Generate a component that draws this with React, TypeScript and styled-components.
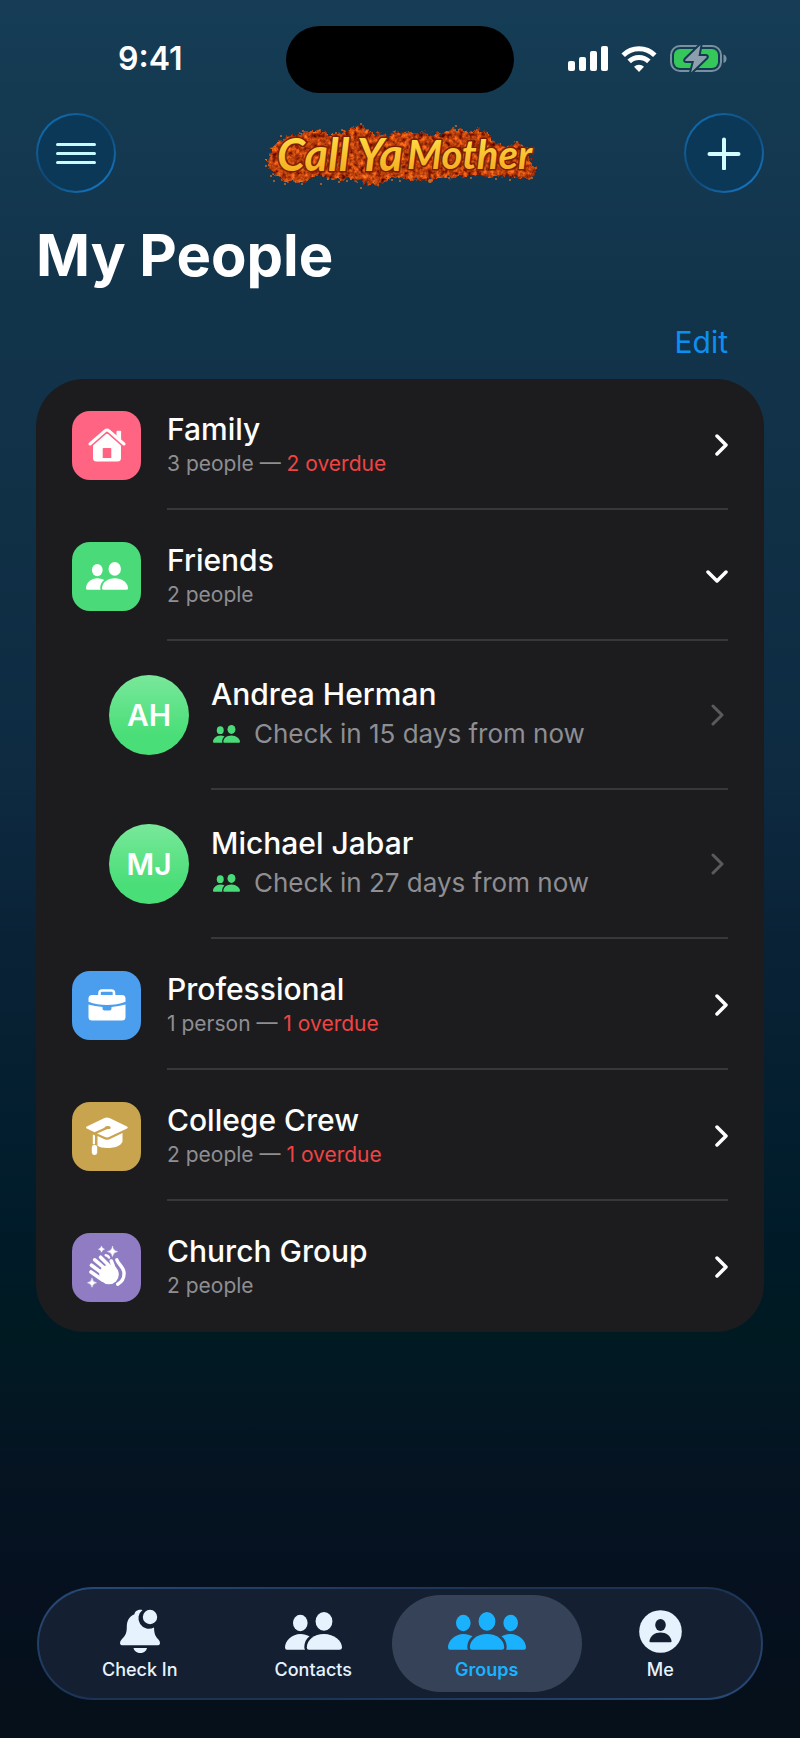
import * as React from 'react'
import styled, { createGlobalStyle } from 'styled-components'

const colors = {
  card: '#1c1c1e',
  divider: '#38383a',
  text: '#ffffff',
  muted: '#8e8e93',
  overdue: '#ef4444',
  link: '#0d8ff2',
  tab: '#e6f3ff',
  tabActive: '#1ab2ff',
}

const GlobalStyle = createGlobalStyle`
  * {
    box-sizing: border-box;
  }
  body {
    margin: 0;
    background: #05101a;
  }
  button {
    font: inherit;
    color: inherit;
    background: none;
    border: 0;
    padding: 0;
    cursor: pointer;
  }
`

const Screen = styled.div`
  min-height: 100vh;
  display: flex;
  flex-direction: column;
  color: ${colors.text};
  font-family: Inter, 'Liberation Sans', sans-serif;
  background: linear-gradient(
    #153d55 0%,
    #12344b 17%,
    #103046 30%,
    #0d2a41 45%,
    #0a2236 54%,
    #031e2e 65%,
    #001a28 72%,
    #001a22 77%,
    #051422 84%,
    #06101f 92%,
    #05101a 100%
  );
`

const StatusBar = styled.div`
  display: grid;
  grid-template-columns: 1fr 228px 1fr;
  padding: 25px 36px 0;
  align-items: center;
`

const Clock = styled.span`
  font-size: 32px;
  line-height: 68px;
  font-weight: 600;
  padding-left: 82px;
`

const Island = styled.div`
  height: 67px;
  border-radius: 34px;
  background: #000;
`

const StatusIcons = styled.div`
  display: flex;
  align-items: center;
  justify-content: flex-end;
  gap: 13px;
  padding-right: 37px;
`

const Header = styled.header`
  display: flex;
  align-items: center;
  justify-content: space-between;
  padding: 20px 36px 0;
`

const RoundButton = styled.button`
  width: 80px;
  height: 80px;
  display: grid;
  place-items: center;
  border-radius: 50%;
  border: 2px solid transparent;
  background:
    linear-gradient(#0c3858, #0c3858) padding-box,
    linear-gradient(140deg, #0f6db0 10%, #0f4a78 45%, #0f4a78 55%, #1478c4 90%) border-box;
`

const Title = styled.h1`
  margin: 26px 36px 0;
  font-size: 58px;
  line-height: 72px;
  font-weight: 700;
`

const Toolbar = styled.div`
  display: flex;
  justify-content: flex-end;
  padding: 33px 72px 19px;
`

const EditButton = styled.button`
  font-size: 30px;
  line-height: 36px;
  color: ${colors.link};
`

const Card = styled.ul`
  list-style: none;
  margin: 0 36px;
  padding: 0;
  border-radius: 48px;
  background: ${colors.card};
`

const Item = styled.li<{ $indent: number }>`
  position: relative;

  &:not(:last-child)::after {
    content: '';
    position: absolute;
    left: ${props => props.$indent}px;
    right: 36px;
    bottom: 0;
    height: 2px;
    background: ${colors.divider};
  }
`

const GroupButton = styled.button`
  width: 100%;
  display: flex;
  align-items: center;
  gap: 26px;
  padding: 31px 36px 30px;
  text-align: left;
`

const ContactButton = styled(GroupButton)`
  gap: 22px;
  padding: 34px 40px 35px 73px;
`

const Tile = styled.span<{ $color: string }>`
  width: 69px;
  height: 69px;
  display: grid;
  place-items: center;
  border-radius: 18px;
  background: ${props => props.$color};
`

const Avatar = styled.span`
  width: 80px;
  height: 80px;
  display: grid;
  place-items: center;
  border-radius: 50%;
  font-size: 30px;
  font-weight: 600;
  background: linear-gradient(#79e89b, #4ade78 75%);
`

const Labels = styled.span`
  flex: 1;
  display: flex;
  flex-direction: column;
`

const Name = styled.span`
  font-size: 30px;
  line-height: 38px;
  font-weight: 500;
`

const Summary = styled.span`
  font-size: 21px;
  line-height: 32px;
  color: ${colors.muted};
`

const Overdue = styled.span`
  color: ${colors.overdue};
`

const NextCheckIn = styled.span`
  display: flex;
  align-items: center;
  gap: 14px;
  padding-left: 2px;
  font-size: 26px;
  line-height: 42px;
  color: ${colors.muted};
`

const TabBar = styled.nav`
  display: flex;
  margin: auto 37px 38px;
  height: 113px;
  padding: 5px 14px;
  border: 2px solid transparent;
  border-radius: 57px;
  background:
    linear-gradient(#142031, #142031) padding-box,
    linear-gradient(165deg, #294a78, #1c3354 40%, #1c3354 60%, #294a78) border-box;
`

const Tab = styled.button<{ $active?: boolean }>`
  position: relative;
  flex: 1;
  display: flex;
  flex-direction: column;
  align-items: center;
  color: ${props => (props.$active ? colors.tabActive : colors.tab)};

  &::before {
    content: '';
    position: absolute;
    inset: 1px -8px;
    border-radius: 49px;
    background: ${props => (props.$active ? '#364257' : 'transparent')};
  }
`

const TabIcon = styled.span`
  position: relative;
  height: 62px;
  display: flex;
  align-items: center;
  padding-top: 12px;
`

const TabLabel = styled.span<{ $active?: boolean }>`
  position: relative;
  font-size: 18px;
  line-height: 28px;
  font-weight: ${props => (props.$active ? 600 : 500)};
`

const SignalIcon = () => (
  <svg width="40" height="26" viewBox="0 0 40 26" fill="#fff">
    <rect x="0" y="15" width="7" height="10" rx="2" />
    <rect x="11" y="11" width="7" height="14" rx="2" />
    <rect x="22" y="5" width="7" height="20" rx="2" />
    <rect x="33" y="0" width="7" height="25" rx="2" />
  </svg>
)

const WifiIcon = () => (
  <svg width="36" height="26" viewBox="0 0 36 26" fill="none" stroke="#fff" strokeWidth="5">
    <path d="M2.2 9.2a22.5 22.5 0 0 1 31.6 0" />
    <path d="M8.2 15.4a14 14 0 0 1 19.6 0" />
    <path d="M18 26l-5-5.2a7.2 7.2 0 0 1 10 0z" fill="#fff" stroke="none" />
  </svg>
)

const BatteryIcon = () => (
  <svg width="57" height="28" viewBox="0 0 57 28">
    <rect x="1" y="1" width="50" height="25" rx="9" fill="none" stroke="#7990a0" strokeWidth="2" />
    <path d="M53.5 9.5c4 1 4 7.5 0 8.5z" fill="#7990a0" />
    <rect x="4" y="4" width="44" height="19" rx="6" fill="#35c759" />
    <path
      d="M30.5 0L15.5 14.5q-1 1.5 1 1.5H24L21 27.5 36.5 12.5q1-1.5-1-1.5H28.5z"
      fill="#8d9fac"
      stroke="#143a52"
      strokeWidth="4"
      strokeLinejoin="round"
      paintOrder="stroke"
    />
  </svg>
)

const MenuIcon = () => (
  <svg width="40" height="24" viewBox="0 0 40 24" stroke="#c4fcff" strokeWidth="3" strokeLinecap="round">
    <path d="M1.5 3.5h37M1.5 12.5h37M1.5 21.5h37" />
  </svg>
)

const PlusIcon = () => (
  <svg width="34" height="34" viewBox="0 0 34 34" stroke="#d2fcff" strokeWidth="4" strokeLinecap="round">
    <path d="M2.5 18h29M17 3.5v29" />
  </svg>
)

// loose crumbs around the splash, x / y / radius
const crumbs = [
  [31, 25, 1], [111, 13, 1], [92, 19, 1], [86, 22, 1], [53, 20, 1], [206, 15, 1], [205, 19, 1],
  [16, 55, 1], [21, 65, 1], [24, 70, 1], [35, 73, 1], [52, 73, 1], [71, 73, 1], [89, 71, 1],
  [97, 70, 1], [111, 77, 1], [128, 74, 1], [142, 69, 1], [150, 70, 1], [160, 66, 1], [180, 70, 2],
  [199, 67, 1], [221, 67, 1], [246, 68, 1], [260, 69, 1], [282, 67, 1], [286, 57, 1], [267, 31, 1],
]

const Logo = () => (
  <svg width="300" height="80" viewBox="0 2 300 80" role="img" aria-label="Call Ya Mother">
    <defs>
      <linearGradient id="cheese" x1="0" y1="0" x2="0" y2="1">
        <stop offset="0.15" stopColor="#ffdc45" />
        <stop offset="0.85" stopColor="#f5ab20" />
      </linearGradient>
      <filter
        id="rough"
        x="-5%"
        y="-20%"
        width="110%"
        height="140%"
        colorInterpolationFilters="sRGB"
      >
        <feTurbulence type="fractalNoise" baseFrequency="0.22" numOctaves="3" seed="4" result="n" />
        <feDisplacementMap
          in="SourceGraphic"
          in2="n"
          scale="9"
          xChannelSelector="R"
          yChannelSelector="G"
          result="shape"
        />
        <feColorMatrix
          in="n"
          values="1.1 0 0 0 0.18  0.7 0 0 0 -0.1  0.2 0 0 0 -0.05  0 0 0 0 1"
          result="tint"
        />
        <feComposite in="tint" in2="shape" operator="in" />
      </filter>
    </defs>
    <path
      filter="url(#rough)"
      fill="#b8410f"
      d="M18 50L22 38 31 28 44 24 54 20 66 20 80 23 90 23 98 18 113 16 126 22 138 24 150 19 163 22 180 23 194 22 206 17 218 21 228 18 238 22 245 32 256 35 266 31 277 37 280 48 286 58 281 68 270 67 252 65 240 67 224 64 210 66 190 67 176 68 160 69 142 66 128 74 113 72 100 67 84 69 67 65 52 72 35 70 22 64Z"
    />
    <g fill="#c56a2c">
      {crumbs.map(([x, y, r]) => (
        <circle key={`${x}-${y}`} cx={x} cy={y} r={r} />
      ))}
    </g>
    <g
      fontFamily="Lato, 'Liberation Sans', sans-serif"
      fontStyle="italic"
      fontWeight="700"
      fontSize="45"
      fill="url(#cheese)"
      stroke="#7a1f06"
      strokeWidth="3"
      strokeLinejoin="round"
      paintOrder="stroke"
    >
      <text x="27" y="60">Call</text>
      <text x="107" y="60">Ya</text>
      <text x="157" y="58" fontSize="40">Mother</text>
    </g>
  </svg>
)

const HouseIcon = () => (
  <svg width="38" height="34" viewBox="0 0 38 34">
    <path
      d="M2 16L17 2.8q2-1.7 4 0L36 16"
      fill="none"
      stroke="#fff"
      strokeWidth="3"
      strokeLinecap="round"
      strokeLinejoin="round"
    />
    <path d="M28.5 3.5q0-.8.8-.8h3q.8 0 .8.8v8.3l-4.6-4z" fill="#fff" />
    <path
      d="M5 17.5L17.8 6.3q1.2-1 2.4 0L33 17.5V30q0 3.5-3.5 3.5H8.5Q5 33.5 5 30zM15.5 20q-.8 0-.8.8V30h8.6v-9.2q0-.8-.8-.8z"
      fill="#fff"
      fillRule="evenodd"
    />
  </svg>
)

const PairIcon = ({ size = 57 }: { size?: number }) => (
  <svg width={size} height={(size * 38) / 57} viewBox="0 0 57 38" fill="currentColor">
    <ellipse cx="15.3" cy="11" rx="7.3" ry="8.2" />
    <ellipse cx="39" cy="9.4" rx="8.4" ry="9.4" />
    <path d="M2 37.7Q0 37.7 0 35.5C0 28.5 7 22 15.5 22c3.5 0 6.5 1 9 2.3-3.5 2.7-5.2 6.7-5.2 10.7q0 1.8.7 2.7z" />
    <path d="M24 37.7q-2.2 0-2.2-2.2C21.8 28 29 22 39 22s18 6.5 18 13.5q0 2.2-2.5 2.2z" />
  </svg>
)

const TrioIcon = () => (
  <svg width="78" height="38" viewBox="0 0 78 38" fill="currentColor">
    <ellipse cx="15.3" cy="11" rx="7.3" ry="8.2" />
    <ellipse cx="39" cy="9.4" rx="8.4" ry="9.4" />
    <ellipse cx="62.7" cy="11" rx="7.3" ry="8.2" />
    <path d="M2 37.7Q0 37.7 0 35.5C0 28.5 7 22 15.5 22c3.5 0 6.5 1 9 2.3-3.5 2.7-5.2 6.7-5.2 10.7q0 1.8.7 2.7z" />
    <path d="M24 37.7q-2.2 0-2.2-2.2C21.8 28 29 22 39 22s17.2 6 17.2 13.5q0 2.2-2.2 2.2z" />
    <path d="M76 37.7q2 0 2-2.2C78 28.5 71 22 62.5 22c-3.5 0-6.5 1-9 2.3 3.5 2.7 5.2 6.7 5.2 10.7q0 1.8-.7 2.7z" />
  </svg>
)

const BriefcaseIcon = () => (
  <svg width="38" height="32" viewBox="0 0 38 32">
    <path
      d="M11.5 7V4q0-2.5 2.5-2.5h9.5q2.5 0 2.5 2.5v3"
      fill="none"
      stroke="#fff"
      strokeWidth="2.6"
    />
    <path d="M4 6h30q3.5 0 3.5 3.5v3.3Q29 16 19 16T.5 12.8V9.5Q.5 6 4 6z" fill="#fff" />
    <path
      d="M.5 15.5Q7 17.4 14.5 18v1.5q0 2 2 2h5q2 0 2-2V18q7.5-.6 14-2.5V28q0 3.5-3.5 3.5H4Q.5 31.5.5 28z"
      fill="#fff"
    />
  </svg>
)

const CapIcon = () => (
  <svg width="42" height="38" viewBox="0 0 42 38" fill="#fff">
    <path d="M18.5 1q2.5-1.2 5 0L41 9.5q1.5 1 0 2L23.5 19.8q-2.5 1.2-5 0L11 16.5l10.5-4.6c3 .6 4.5-1.6 1.8-2.6-2.5-.7-4.8.2-4.8 1.5L8.5 15.2.8 11.5q-1.5-1 0-2z" />
    <path d="M11.5 19l7 3.2q2.5 1 5 0L36.5 16v8.5C35 29 28.5 31 21.5 31c-4.5 0-8-.8-10-2.2z" />
    <path d="M6.8 17.5l2.2.9v8.8h-2.2z" />
    <rect x="5.8" y="28" width="5.4" height="10" rx="2.4" />
  </svg>
)

const ClapIcon = () => (
  <svg width="42" height="42" viewBox="0 0 42 42" fill="none" stroke="#fff" strokeLinecap="round">
    <g strokeWidth="3.6">
      <path d="M5 26l11.5 8" />
      <path d="M5.5 19.2L18 28.5" />
      <path d="M8.8 13.8L20 23.5" />
      <path d="M14.6 11.2L24 20.5" />
      <path d="M25.3 15l3.8 10" />
    </g>
    <circle cx="23" cy="28.500" r="9.800" fill="#fff" stroke="none" />
    <path d="M19.8 9.2q2.3.3 3.2 2.3" strokeWidth="2.6" />
    <path d="M30.8 13.800c1.5 4.500 6.700 7.200 7.200 12.700.4 5-2.500 9.500-6.300 11.700" strokeWidth="3.400" />
    <path
      d="M26.5.5q.7 4.400 5 5-4.300.7-5 5-.7-4.300-5-5 4.300-.6 5-5zM15.500.2q.4 2.600 3 3-2.600.4-3 3-.4-2.600-3-3 2.600-.4 3-3zM6 32.300q.6 4 4.500 4.500Q6.600 37.400 6 41.300q-.6-3.900-4.500-4.500 3.900-.5 4.500-4.500z"
      fill="#fff"
      strokeWidth="0.5"
    />
  </svg>
)

const BellIcon = () => (
  <svg width="40" height="44" viewBox="0 0 40 44" fill="currentColor">
    <path d="M22.5 1C17 0 14.5 3 14.5 5.3 8.5 8 6.8 12.5 6.8 18 6.8 24 5.5 26.5 2 30q-2 2-2 4 0 2.3 3 2.3h34q3 0 3-2.3 0-2-2-4c-2.8-3-3.8-5.5-4-11.500A10.500 10.500 0 0 1 22.500 1z" />
    <circle cx="30" cy="8" r="7.2" />
    <path d="M13.5 39h13.500c-.8 3.500-3.500 5-6.700 5s-6-1.500-6.800-5z" />
  </svg>
)

const PersonIcon = () => (
  <svg width="43" height="43" viewBox="0 0 43 43">
    <circle cx="21.5" cy="21.5" r="21.3" fill="currentColor" />
    <g fill="#142031">
      <ellipse cx="21.5" cy="15" rx="5.3" ry="6" />
      <path d="M11.5 32.3q-1.2 0-1-1.5c.8-5 5.3-8.3 11-8.3s10.2 3.3 11 8.3q.2 1.5-1 1.5z" />
    </g>
  </svg>
)

const Chevron = ({ open, faint }: { open?: boolean; faint?: boolean }) => (
  <svg
    width={open ? 22 : 14}
    height={open ? 14 : 22}
    viewBox={open ? '0 0 22 14' : '0 0 14 22'}
    fill="none"
    stroke={faint ? '#5a5a5e' : '#fff'}
    strokeWidth={faint ? 3 : 3.5}
    strokeLinecap="round"
    strokeLinejoin="round"
  >
    <path d={open ? 'M2 3l9 9 9-9' : 'M3 2l9 9-9 9'} />
  </svg>
)

interface Contact {
  initials: string
  name: string
  days: number
}

interface Group {
  name: string
  count: string
  overdue?: number
  color: string
  icon: React.ReactNode
  contacts?: Contact[]
}

const groups: Group[] = [
  { name: 'Family', count: '3 people', overdue: 2, color: '#ff6482', icon: <HouseIcon /> },
  {
    name: 'Friends',
    count: '2 people',
    color: '#4bda79',
    icon: <PairIcon size={42} />,
    contacts: [
      { initials: 'AH', name: 'Andrea Herman', days: 15 },
      { initials: 'MJ', name: 'Michael Jabar', days: 27 },
    ],
  },
  { name: 'Professional', count: '1 person', overdue: 1, color: '#4a9eed', icon: <BriefcaseIcon /> },
  { name: 'College Crew', count: '2 people', overdue: 1, color: '#c8a44e', icon: <CapIcon /> },
  { name: 'Church Group', count: '2 people', color: '#8f7cc3', icon: <ClapIcon /> },
]

const tabs = [
  { label: 'Check In', icon: <BellIcon /> },
  { label: 'Contacts', icon: <PairIcon /> },
  { label: 'Groups', icon: <TrioIcon />, active: true },
  { label: 'Me', icon: <PersonIcon /> },
]

const GroupRow = ({ group }: { group: Group }) => (
  <Item $indent={131}>
    <GroupButton aria-expanded={!!group.contacts}>
      <Tile $color={group.color}>{group.icon}</Tile>
      <Labels>
        <Name>{group.name}</Name>
        <Summary>
          {group.count}
          {group.overdue && (
            <>
              {' — '}
              <Overdue>{group.overdue} overdue</Overdue>
            </>
          )}
        </Summary>
      </Labels>
      <Chevron open={!!group.contacts} />
    </GroupButton>
  </Item>
)

const FriendIcon = styled.span`
  display: flex;
  color: #4bda79;
`

const ContactRow = ({ contact }: { contact: Contact }) => (
  <Item $indent={175}>
    <ContactButton>
      <Avatar>{contact.initials}</Avatar>
      <Labels>
        <Name>{contact.name}</Name>
        <NextCheckIn>
          <FriendIcon>
            <PairIcon size={27} />
          </FriendIcon>
          Check in {contact.days} days from now
        </NextCheckIn>
      </Labels>
      <Chevron faint />
    </ContactButton>
  </Item>
)

const App = () => {
  return (
    <Screen>
      <GlobalStyle />
      <StatusBar>
        <Clock>9:41</Clock>
        <Island />
        <StatusIcons>
          <SignalIcon />
          <WifiIcon />
          <BatteryIcon />
        </StatusIcons>
      </StatusBar>
      <Header>
        <RoundButton aria-label="Menu">
          <MenuIcon />
        </RoundButton>
        <Logo />
        <RoundButton aria-label="Add">
          <PlusIcon />
        </RoundButton>
      </Header>
      <Title>My People</Title>
      <Toolbar>
        <EditButton>Edit</EditButton>
      </Toolbar>
      <Card>
        {groups.map(group => (
          <React.Fragment key={group.name}>
            <GroupRow group={group} />
            {group.contacts?.map(contact => (
              <ContactRow key={contact.name} contact={contact} />
            ))}
          </React.Fragment>
        ))}
      </Card>
      <TabBar>
        {tabs.map(tab => (
          <Tab key={tab.label} $active={tab.active} aria-current={tab.active ? 'page' : undefined}>
            <TabIcon>{tab.icon}</TabIcon>
            <TabLabel $active={tab.active}>{tab.label}</TabLabel>
          </Tab>
        ))}
      </TabBar>
    </Screen>
  )
}

export default App
